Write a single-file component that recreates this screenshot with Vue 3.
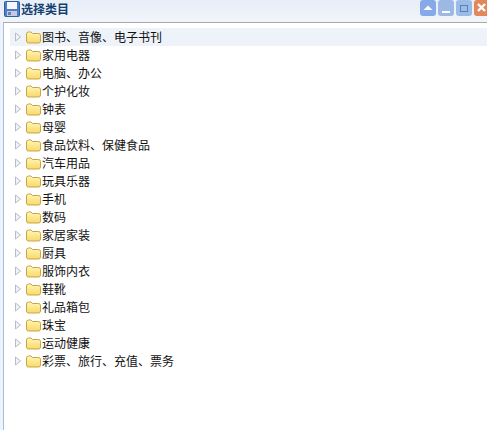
<script setup>
const items = ['图书、音像、电子书刊','家用电器','电脑、办公','个护化妆','钟表','母婴','食品饮料、保健食品','汽车用品','玩具乐器','手机','数码','家居家装','厨具','服饰内衣','鞋靴','礼品箱包','珠宝','运动健康','彩票、旅行、充值、票务']
const buttons = [
  { name: 'up', bg: '#86a9e8' },
  { name: 'min', bg: '#9db8e4' },
  { name: 'max', bg: '#9bbce4' },
  { name: 'close', bg: '#e2875c' }
]
</script>

<template>
  <div class="win">
    <header class="head">
      <svg class="save" width="16" height="16" viewBox="0 0 16 16">
        <rect x="0.5" y="0.5" width="15" height="15" rx="1" fill="#4f80c6" stroke="#2f5f9f"/>
        <rect x="3" y="1" width="10" height="7" fill="#f4f8fd"/>
        <rect x="3" y="10" width="10" height="5" fill="#c6c8e6"/>
        <rect x="4" y="11" width="3" height="3" fill="#6a7fb8"/>
      </svg>
      <span class="title">选择类目</span>
      <div class="tools">
        <span v-for="b in buttons" :key="b.name" class="tool" :style="{ background: b.bg }">
          <svg width="16" height="16" viewBox="0 0 16 16">
            <path v-if="b.name === 'up'" d="M3.500 10 L8 5.500 L12.500 10 Z" fill="#fff"/>
            <rect v-if="b.name === 'min'" x="4" y="11" width="8" height="2" fill="#fff"/>
            <rect v-if="b.name === 'max'" x="4.500" y="5.500" width="7" height="6" fill="none" stroke="#5b7fb8"/>
            <path v-if="b.name === 'close'" d="M4 4 L11 11 M11 4 L4 11" stroke="#fff" stroke-width="2.400"/>
          </svg>
        </span>
      </div>
    </header>
    <main class="body">
      <ul class="tree">
        <li v-for="(t, i) in items" :key="t" class="row" :class="{ active: i === 0 }">
          <svg class="arrow" width="8" height="10" viewBox="0 0 8 10">
            <path d="M1.500 1 L6.500 5 L1.500 9 Z" fill="#f2f4f8" stroke="#b4bccb"/>
          </svg>
          <svg class="folder" width="15" height="13" viewBox="0 0 15 13">
            <defs>
              <linearGradient id="fg" x1="0" y1="0" x2="0" y2="1">
                <stop offset="0" stop-color="#fff7b8"/>
                <stop offset="1" stop-color="#f9d868"/>
              </linearGradient>
            </defs>
            <path d="M.5 3 Q.5 1 2.500 1 H5 L6.500 2.500 H12.500 Q14.500 2.500 14.500 4.500 V10 Q14.500 12 12.500 12 H2.500 Q.5 12 .5 10 Z" fill="url(#fg)" stroke="#c9a544"/>
          </svg>
          <span class="label">{{ t }}</span>
        </li>
      </ul>
    </main>
  </div>
</template>

<style>
html, body { margin: 0; background: #fff; }
</style>

<style scoped>
.win { width: 487px; height: 430px; background: #eef3fa; display: flex; flex-direction: column; overflow: hidden; font-family: "Noto Sans CJK SC", "Liberation Sans", sans-serif; }
.head { height: 22px; flex: none; display: flex; align-items: flex-start; padding-left: 4px; background: linear-gradient(#e6eef8, #f1f5fb); }
.save { flex: none; margin-top: 1px; }
.title { margin-left: 1px; font-size: 12px; line-height: 18px; font-weight: 700; color: #15406f; }
.tools { margin-left: auto; display: flex; gap: 2px; margin-right: -3px; }
.tool { width: 16px; height: 16px; border-radius: 3px; display: flex; align-items: center; justify-content: center; }
.body { flex: 1; margin-left: 3px; background: #fff; border-left: 1px solid #9ec0e6; border-top: 1px solid #a9a9a9; padding-top: 5px; }
.tree { list-style: none; margin: 0; padding: 0 0 0 6px; }
.row { height: 18px; display: flex; align-items: center; font-size: 12px; color: #111; }
.row.active { background: #eef3fa; }
.arrow { margin-left: 4px; flex: none; }
.folder { margin-left: 4px; flex: none; }
.label { margin-left: 1px; margin-bottom: 2px; white-space: nowrap; }
</style>
